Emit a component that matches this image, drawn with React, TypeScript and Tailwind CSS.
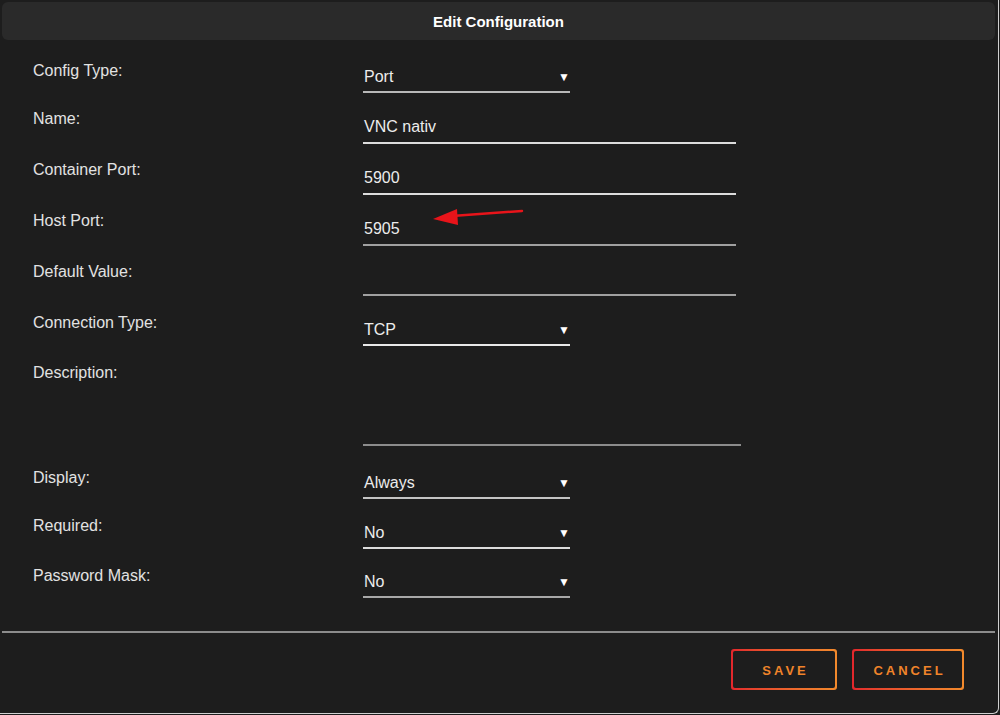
import React from "react";

type Row = {
    label: string;
    value?: string;
    select?: boolean;
    wide?: boolean;
    h: string;
    lpt: string;
    vpt: string;
    line: string;
};

const rows: Row[] = [
    {label: 'Config Type:', value: 'Port', select: true, h: 'h-[51px]', lpt: 'pt-[17px]', vpt: 'pt-[26px]', line: 'border-[#b8b8b8]'},
    {label: 'Name:', value: 'VNC nativ', h: 'h-[51px]', lpt: 'pt-[14px]', vpt: 'pt-[25px]', line: 'border-[#dcdcdc]'},
    {label: 'Container Port:', value: '5900', h: 'h-[51px]', lpt: 'pt-[14px]', vpt: 'pt-[25px]', line: 'border-[#dcdcdc]'},
    {label: 'Host Port:', value: '5905', h: 'h-[51px]', lpt: 'pt-[14px]', vpt: 'pt-[25px]', line: 'border-[#a0a0a0]'},
    {label: 'Default Value:', value: '', h: 'h-[50px]', lpt: 'pt-[14px]', vpt: 'pt-[25px]', line: 'border-[#a0a0a0]'},
    {label: 'Connection Type:', value: 'TCP', select: true, h: 'h-[50px]', lpt: 'pt-[15px]', vpt: 'pt-[25px]', line: 'border-[#e8e8e8]'},
    {label: 'Description:', value: '', wide: true, h: 'h-[100px]', lpt: 'pt-[15px]', vpt: 'pt-[25px]', line: 'border-[#8c8c8c]'},
    {label: 'Display:', value: 'Always', select: true, h: 'h-[53px]', lpt: 'pt-[20px]', vpt: 'pt-[28px]', line: 'border-[#c4c4c4]'},
    {label: 'Required:', value: 'No', select: true, h: 'h-[50px]', lpt: 'pt-[15px]', vpt: 'pt-[25px]', line: 'border-[#dcdcdc]'},
    {label: 'Password Mask:', value: 'No', select: true, h: 'h-[49px]', lpt: 'pt-[15px]', vpt: 'pt-[24px]', line: 'border-[#a8a8a8]'},
];

function Field({row}: {row: Row}) {
    const width = row.select ? 'w-[207px]' : row.wide ? 'w-[378px]' : 'w-[373px]';
    return (
        <div className={`${width} h-full flex flex-col border-b-[2px] ${row.line} ${row.vpt}`}>
            <div className="flex items-center justify-between h-[18px] pl-[1px]">
                <span className="text-[16px] leading-[18px] text-[#ececec]">{row.value}</span>
                {row.select && <span className="text-[12px] leading-[12px] text-white">▼</span>}
            </div>
        </div>
    );
}

function GradientButton({label, width}: {label: string; width: string}) {
    return (
        <div className={`${width} h-[41px] rounded-[3px] p-[2px] bg-gradient-to-r from-[#e2262c] to-[#f28a2c]`}>
            <div className="w-full h-full rounded-[2px] bg-[#1d1d1d] flex items-center justify-center pt-[3px]">
                <span className="text-[13px] font-bold tracking-[3px] text-[#f0842a] pl-[3px]">{label}</span>
            </div>
        </div>
    );
}

export default function App() {
    return (
        <div className="w-[1000px] h-[715px] bg-[#1d1d1d] overflow-hidden" style={{fontFamily: '"Liberation Sans", Arial, sans-serif'}}>
            <div className="relative w-[999px] h-[714px] border-r border-b border-[#d0d0d0] rounded-br-[6px] flex flex-col">
                {/* header */}
                <div className="mx-[2px] mt-[2px] w-[993px] h-[38px] rounded-[6px] bg-[#2a2a2a] flex items-center justify-center pt-[3px]">
                    <span className="text-[15px] font-bold text-white">Edit Configuration</span>
                </div>

                {/* form */}
                <div className="flex flex-col pt-[2px]">
                    {rows.map((row) => (
                        <div key={row.label} className={`flex ${row.h}`}>
                            <div className={`w-[363px] pl-[33px] ${row.lpt}`}>
                                <span className="text-[16px] leading-[18px] text-[#e2e2e2]">{row.label}</span>
                            </div>
                            <Field row={row}/>
                        </div>
                    ))}
                </div>

                {/* divider */}
                <div className="mt-[33px] ml-[2px] w-[993px] h-[2px] bg-[#8c8c8c]"/>

                {/* footer */}
                <div className="flex justify-end gap-[15px] pr-[34px] pt-[16px]">
                    <GradientButton label="SAVE" width="w-[106px]"/>
                    <GradientButton label="CANCEL" width="w-[112px]"/>
                </div>

                {/* annotation arrow */}
                <svg className="absolute left-[430px] top-[203px]" width="100" height="26" viewBox="0 0 100 26">
                    <line x1="92" y1="8" x2="22" y2="13" stroke="#e8141a" strokeWidth="2.5" strokeLinecap="round"/>
                    <polygon points="3,16 27,6 28,22" fill="#e8141a"/>
                </svg>
            </div>
        </div>
    );
}
